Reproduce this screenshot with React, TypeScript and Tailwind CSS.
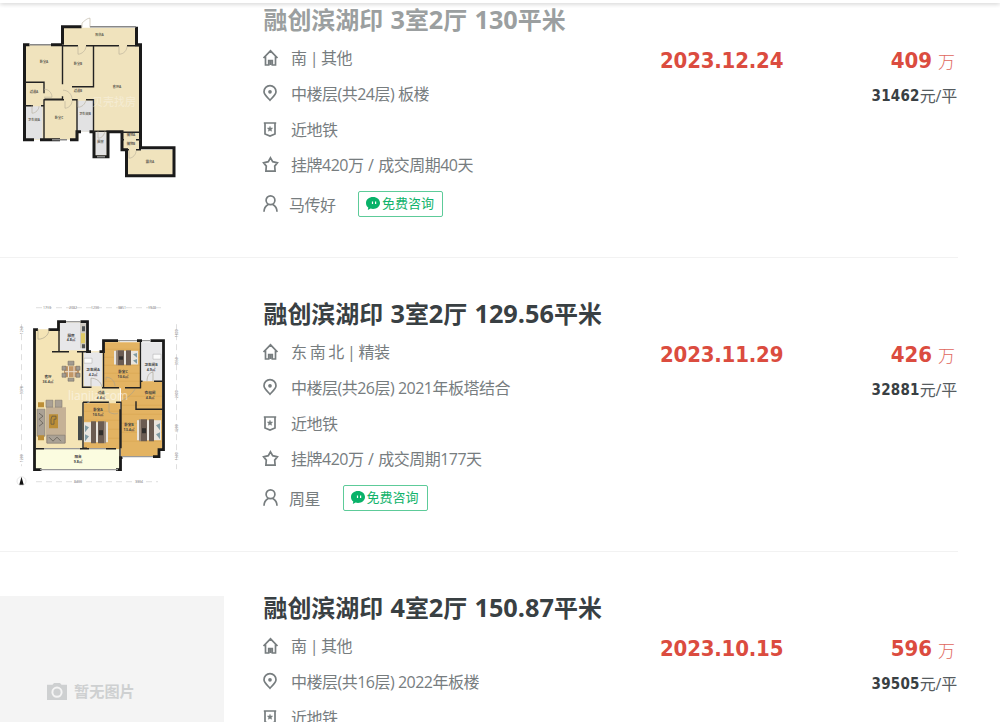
import type { ReactNode } from "react";

type House = {
    title: string;
    visited?: boolean;
    info: string;
    floor: string;
    deal: string;
    agent: string;
    date: string;
    total: string;
    unit: string;
    cover: ReactNode;
};

function Wall({ d }: { d: string }) {
    return <path d={d} fill="none" stroke="#222" strokeWidth="1.4" />;
}

function PlanA() {
    return (
        <svg viewBox="0 -1.2 224 190" className="h-[190px] w-[224px]">
            <path d="M62.5 18.5h74.5v18h4v85h-1v19h34v26h-47.500v-25h-4v-19h-15v25h-12v-25h-17v8h-53v-95h37z" fill="#f0e3bd" />
            <path d="M25.500 97h17v33h-17zM77 91.500h16.500v31H77zM95.500 123h11v23h-11z" fill="#e2e2e3" />
            <path d="M62.500 35.500v-18h19M136.500 17.500v18h4v103h33.500v28h-47.500v-26h-4.500v-18h-14v25h-14v-25M93.500 122.500h-4M81 122.500h-4v8h-7M60 130.500h-20M34 130.500h-9.500v-95h5M51 35.500h11" fill="none" stroke="#1a1a1a" strokeWidth="3" />
            <Wall d="M62 36.500h16M86 36.500h33M127 36.500h13M62.500 36v39M62.500 87v3h-18M44 90v41M93.500 37v40.500H72M44 84v-11H25M25 96.500h8M41 96.500h3M44 90.500h20M72 90.500h5v40M86 90.500h7.500v32M93 122h14M121 123h18M121 130.500h3M136 130.500h5M127 140.500h2M136 140.500h5" />
            <path d="M90 17.500h46M30 35.500h21M52 130.500h15M97 147.500h8" stroke="#888" strokeWidth="1.500" />
            <path d="M82 18v-4c4-4 6-5 8-5v9M78 37v8c4 0 8-4 8-8M119 37v8c5 0 8-4 8-8M44 80c5 0 8 4 8 8h-8M65 92v7c4 0 7-4 7-7M32 96v8c4 0 7-4 7-7M78 91v7c4 0 7-3 8-7M63 81c5 0 9 4 9 9M98 122v7c4 0 6-3 7-7M129 141v8c4 0 7-4 7-7" fill="none" stroke="#b5ad98" strokeWidth=".6" />
            <g fill="#625e54" fontSize="3.200" fontWeight="700" textAnchor="middle">
                <text x="99.500" y="27">阳台A</text>
                <text x="44" y="54">卧室A</text>
                <text x="78" y="56">卧室B</text>
                <text x="117" y="79">客厅A</text>
                <text x="34" y="84">过道A</text>
                <text x="78" y="83">过道B</text>
                <text x="34" y="112">卫生间A</text>
                <text x="59" y="110">卧室C</text>
                <text x="85" y="106">卫生间B</text>
                <text x="100.500" y="134">厨房</text>
                <text x="131" y="126.500">储物A</text>
                <text x="131" y="136">储物B</text>
                <text x="150" y="153.500">露台A</text>
            </g>
            <text x="114" y="97" fill="#fff" fillOpacity=".35" fontSize="11" textAnchor="middle">贝壳找房</text>
        </svg>
    );
}

function Bed({ x, y, flip }: { x: number; y: number; flip?: boolean }) {
    return (
        <g transform={flip ? `translate(${x + 24} ${y}) scale(-1 1)` : `translate(${x} ${y})`}>
            <path d="M0 1h24v20H0z" fill="#e9e5de" />
            <path d="M7 0h5v22H7zM14 0h6v22h-6z" fill="#6b5c52" />
            <path d="M20 0h2v22h-2z" fill="#9a8b7d" />
            <path d="M1 4l4 2-4 5zM1 13l4 2-4 5z" fill="#809ba3" />
            <path d="M15 9h4v5h-4z" fill="#302e2c" />
        </g>
    );
}

function PlanB() {
    return (
        <svg viewBox="0 .8 224 190" className="h-[190px] w-[224px]">
            <path d="M35 28h22V20h31v30h15v-11h17v129H35z" fill="#f4e4b6" />
            <path d="M104 41h37v46h-37zM84 102h36v46H84zM121 87h41v62h-3v6h-38z" fill="#e3b362" />
            <path d="M104 48h37M104 56h37M104 64h37M104 72h37M104 80h37M84 110h36M84 119h36M84 128h36M84 137h36M121 95h41M121 104h41M121 113h41M121 122h41M121 131h41M121 140h41" stroke="#d4a04f" strokeWidth=".5" />
            <path d="M60 21h27v28H60zM84 51h18v34H84zM142 41h20v39h-20z" fill="#e7e7e9" />
            <path d="M141 80h21v8h-21z" fill="#e3b362" />
            <path d="M36 148h83v20H36z" fill="#fbfce0" />
            <path d="M38 28.500h-3.500v140h7M116 168.500h4.500v-12h2M153 155.500h6v-7h4.500v-109h-13M142 39.500h-5M118 39.500h-14.500v11h-4M91 50.500h-3.500v-30h-7M66 20.500h-7.500v8h-10" fill="none" stroke="#1a1a1a" strokeWidth="2.800" />
            <Wall d="M59 29v21M52 50.500h17M77 50.500h14M82.500 51v35h9M102 86.500h17M103.500 50v37M140.500 40v47M125 86.500h16M140.500 80h2M154 80h10M136 100v8h27M83 101h26M116 101h5v46M83 101v46h4M106 147.500h10M35 147.500h9M80 147.500h9M120 108v50" />
            <path d="M40 168.500h78M123 155.500h30M44 147.500h36M89 147.500h17M118 39.500h19M142 39.500h9M66 20.500h14" stroke="#989898" strokeWidth="1.200" />
            <path d="M80 22h6v25h-6z" fill="#cfcac0" />
            <path d="M81 32h4v10h-4z" fill="#dfca64" />
            <path d="M82 25h3v5h-3zM82 43h3v4h-3z" fill="#4e5254" />
            <path d="M38 28v10c6 0 11-4 11-10M91 86v-9c5 0 10 3 11 9M106 79v-3c6 0 9 5 9 9M109 101v10c4 2 7 2 9 1M147 80c0-6 3-9 6-9v9M122 99c4-1 10-6 13-11" fill="none" stroke="#a49d8c" strokeWidth=".6" />
            <path d="M64 65h15v11H64z" fill="#c39868" />
            <path d="M68 60h6v4h-6zM68 77h6v3h-6zM62 65h4v4h-4zM76 65h4v4h-4zM62 72h4v4h-4zM76 72h4v4h-4z" fill="#a19b90" stroke="#6d675e" strokeWidth=".5" />
            <path d="M68.500 65v11M65 70.500h12M74 65v11" stroke="#e9ded0" strokeWidth="1" />
            <path d="M46 106h20v36H46z" fill="#c5b196" />
            <path d="M37 108h8v27h-8zM46 99h7v7h-7zM55 99h7v7h-7zM47 134h18v8H47z" fill="#aaa195" stroke="#837b70" strokeWidth=".6" />
            <path d="M49 113h9v14h-9zM38 101h6v5h-6zM38 134h6v5h-6z" fill="#bc8e37" />
            <path d="M52 115h4v3h-2v5h-3v-5zM49 136l4 4 4-4 4 4M39 112l4 3-4 3 4 4-4 3" fill="none" stroke="#57534a" strokeWidth=".7" />
            <path d="M78 115h4v24h-4z" fill="#44494a" />
            <g transform="translate(114 49) scale(1 .68)"><Bed x={0} y={0} flip /></g>
            <Bed x={84} y={120} />
            <Bed x={137} y={118} flip />
            <path d="M84 57h8v5h-8zM153 53h8v5h-8z" fill="#fafafa" stroke="#aaa" strokeWidth=".5" />
            <g fill="#444" fontSize="3.600" fontWeight="700" textAnchor="middle">
                <text x="71" y="35.500">厨房</text><text x="71" y="40">4.8㎡</text>
                <text x="48" y="77">客厅</text><text x="48" y="82">36.4㎡</text>
                <text x="93" y="70">卫生间A</text><text x="93" y="74.500">4.2㎡</text>
                <text x="123" y="72">卧室C</text><text x="123" y="76.500">10.6㎡</text>
                <text x="151" y="65">卫生间B</text><text x="151" y="69.500">4.9㎡</text>
                <text x="101" y="93">过道</text><text x="101" y="97.500">4.4㎡</text>
                <text x="150" y="93">衣帽间</text><text x="150" y="97.500">4.8㎡</text>
                <text x="98" y="110">卧室A</text><text x="98" y="114.500">10.5㎡</text>
                <text x="129" y="125">卧室B</text><text x="129" y="129.500">13.4㎡</text>
                <text x="78" y="157">阳台</text><text x="78" y="161.500">9.8㎡</text>
            </g>
            <text x="98" y="99" fill="#fff" fillOpacity=".5" fontSize="12" textAnchor="middle">lianjia.com</text>
            <path d="M36 6.500h125M36 180.500h122M21.500 23v142M176.500 23v145" stroke="#c9c9c9" strokeWidth=".6" strokeDasharray="6 4" />
            <g fill="#777" fontSize="3.500" textAnchor="middle">
                <text x="47" y="7.500">1713</text><text x="73" y="7.500">2382</text><text x="95" y="7.500">1200</text><text x="122" y="7.500">3851</text><text x="152" y="7.500">1948</text>
                <text x="78" y="181.500">8400</text><text x="139" y="181.500">3304</text>
                <text transform="translate(23 89) rotate(-90)">9378</text><text transform="translate(23 29) rotate(-90)">1250</text><text transform="translate(23 157) rotate(-90)">1200</text>
                <text transform="translate(178 32) rotate(-90)">1800</text><text transform="translate(178 60) rotate(-90)">3950</text><text transform="translate(178 93) rotate(-90)">2300</text><text transform="translate(178 127) rotate(-90)">4200</text><text transform="translate(178 155) rotate(-90)">1500</text>
            </g>
            <circle cx="21.500" cy="180" r="4.500" fill="#fff" stroke="#e2e2e2" strokeWidth=".8" />
            <path d="M21.500 175.500l2.200 8h-4.400z" fill="#111" />
        </svg>
    );
}

function NoPhoto() {
    return (
        <div className="flex h-[190px] w-[224px] items-center bg-[#f4f4f4] pl-[47px] text-[#ced0d1]">
            <svg viewBox="0 0 20 17" className="h-[17px] w-[20px]" fill="currentColor">
                <path fillRule="evenodd" d="M0 1.800h5.500L7 0h6l1.500 1.800H20V17H0zM10 3.600a5.600 5.600 0 1 0 0 11.200 5.600 5.600 0 0 0 0-11.200z" />
                <circle cx="10" cy="9.200" r="3.600" />
            </svg>
            <span className="ml-[7px] text-[15.200px] font-bold leading-5">暂无图片</span>
        </div>
    );
}

const icons = {
    house: <path d="M.5 9L7.500 1.800l7 7.200M2.500 7.500V16h3.200v-4.500h3.600V16h3.200V7.500M7.500 12v4" />,
    pin: <><path d="M7 15.200C4.500 12.500 1 9.500 1 6.700a6 6 0 0 1 12 0c0 2.800-3.500 5.800-6 8.500z" /><circle cx="7" cy="6.800" r="1" fill="currentColor" /></>,
    metro: <><path d="M2 2v11l5 2 5-2V2M.8 2h12.400" /><path d="M7 5.200l.8 1.700 1.900.2-1.400 1.300.4 1.900L7 9.400l-1.700.9.400-1.900-1.400-1.300 1.900-.2z" fill="currentColor" strokeWidth=".4" /></>,
    star: <path d="M7.500 1.800l2.200 3.900 4.700 1.100-2.700 3.300.4 5.100H2.900l.4-5.100L.6 6.800l4.700-1.100z" />,
    person: <><circle cx="7.500" cy="5.200" r="4.400" /><path d="M1 16.800c0-3.300 1.700-5.900 4.200-7.300M14 16.800c0-3.300-1.700-5.900-4.200-7.300" /></>,
};

function Line({ icon, className, children }: { icon: ReactNode; className: string; children: ReactNode }) {
    return (
        <div className={`flex items-center whitespace-pre text-[16px] tracking-[-0.5px] text-[#777d7f] ${className}`}>
            <svg viewBox="0 0 15 18" className="mr-[13px] h-[18px] w-[15px] overflow-visible" fill="none" stroke="currentColor" strokeWidth="1.700">{icon}</svg>
            {children}
        </div>
    );
}

function Title({ text, visited }: { text: string; visited?: boolean }) {
    return (
        <h2 className={`-mt-[1px] h-[25px] whitespace-pre pl-[0.500px] text-[23.950px] font-bold leading-[24px] [word-spacing:1px] ${visited ? "text-[#9b9fa0]" : "text-[#394043]"}`}>
            {text.split(/([\d.]+)/).map((part, i) => (
                <span key={i} className={i % 2 ? "text-[25.300px]" : ""}>{part}</span>
            ))}
        </h2>
    );
}

function Item({ house }: { house: House }) {
    return (
        <li className="flex h-[294.300px] w-[958px] shrink-0 border-b border-[#f2f2f2] pt-[44px]">
            <div className="w-[263px] shrink-0">{house.cover}</div>
            <div className="w-[397px] shrink-0">
                <Title text={house.title} visited={house.visited} />
                <Line icon={icons.house} className="mt-[14px] h-[24px] [word-spacing:-0.500px]">{house.info}</Line>
                <Line icon={icons.pin} className="mt-[12px] h-[24px]">{house.floor}</Line>
                <Line icon={icons.metro} className="mt-[12px] h-[24px]">近地铁</Line>
                <Line icon={icons.star} className="mt-[11px] h-[24px] [word-spacing:1px]">{house.deal}</Line>
                <Line icon={icons.person} className="mt-[14px] h-[26px]">
                    <span className="-ml-[2px] pt-[2px]">{house.agent}</span>
                    <span className="ml-[22.500px] flex h-[26px] w-[85px] items-center rounded-[2px] border border-[#5dcb99] pl-[7px] text-[13px] tracking-normal text-[#11b36b]">
                        <svg viewBox="0 0 14 13" className="mr-[2px] h-[13px] w-[14px]">
                            <path d="M7 0C3 0 0 2.500 0 6c0 2 .9 3.600 2.300 4.600L1.800 13l2.800-1.400c.8.200 1.500.3 2.400.3 4 0 7-2.500 7-5.900S11 0 7 0z" fill="#09b269" />
                            <path d="M6.500 4.500V7M9.600 4.500V7" stroke="#fff" strokeWidth="1.200" />
                        </svg>
                        免费咨询
                    </span>
                </Line>
            </div>
            <div className="w-[150px] shrink-0 pt-[41px] font-['DejaVu_Sans_Condensed','DejaVu_Sans',sans-serif] text-[22px] font-bold leading-[24px] tracking-[-0.200px] text-[#db4c3f]">{house.date}</div>
            <div className="flex grow flex-col items-end pt-[41px]">
                <div className="flex items-center text-[#db4c3f]">
                    <span className="font-['DejaVu_Sans_Condensed','DejaVu_Sans',sans-serif] text-[22px] font-bold leading-[24px]">{house.total}</span>
                    <span className="ml-[6px] mr-[3px] pt-[2px] text-[17px] font-light leading-[21px] opacity-85">万</span>
                </div>
                <div className="mr-[1px] mt-[12px] flex items-center leading-[22px] text-[#394043]">
                    <span className="font-['DejaVu_Sans_Condensed','DejaVu_Sans',sans-serif] text-[15px] font-bold tracking-[0.250px]">{house.unit}</span>
                    <span className="text-[16px] tracking-[-0.200px] text-[#565c5f]">元/平</span>
                </div>
            </div>
        </li>
    );
}

const houses: House[] = [
    { title: "融创滨湖印 3室2厅 130平米", visited: true, info: "南 | 其他", floor: "中楼层(共24层) 板楼", deal: "挂牌420万 / 成交周期40天", agent: "马传好", date: "2023.12.24", total: "409", unit: "31462", cover: <PlanA /> },
    { title: "融创滨湖印 3室2厅 129.56平米", info: "东 南 北 | 精装", floor: "中楼层(共26层) 2021年板塔结合", deal: "挂牌420万 / 成交周期177天", agent: "周星", date: "2023.11.29", total: "426", unit: "32881", cover: <PlanB /> },
    { title: "融创滨湖印 4室2厅 150.87平米", info: "南 | 其他", floor: "中楼层(共16层) 2022年板楼", deal: "挂牌596万", agent: "周星", date: "2023.10.15", total: "596", unit: "39505", cover: <NoPhoto /> },
];

export default function App() {
    return (
        <div className="h-[722px] w-[1000px] overflow-hidden bg-white font-['Open_Sans','Noto_Sans_CJK_SC',sans-serif]">
            <div className="relative z-10 h-[3px] bg-white shadow-[0_1px_4px_rgba(0,0,0,0.22)]" />
            <ul className="-mt-[39.500px] flex flex-col">
                {houses.map((house) => <Item key={house.title} house={house} />)}
            </ul>
        </div>
    );
}
